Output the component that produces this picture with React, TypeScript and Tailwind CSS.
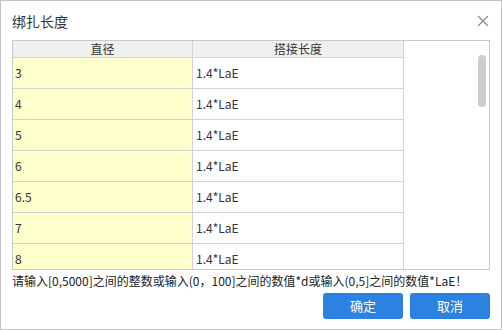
const rows = ['3', '4', '5', '6', '6.5', '7', '8'];

const font = { fontFamily: '"Noto Sans CJK SC", "Noto Sans", sans-serif' };

export default function App() {
  return (
    <div
      className="w-[502px] h-[330px] bg-white border border-[#c4c4c4] relative text-[#333]"
      style={font}
    >
      {/* Title bar */}
      <div className="h-[39px] flex items-center justify-between pl-[11px] pr-[12px]">
        <span className="text-[14px] leading-none">绑扎长度</span>
        <svg width="12" height="12" viewBox="0 0 12 12" className="mt-[1px]">
          <path d="M1 1 L11 11 M11 1 L1 11" stroke="#8a8a8a" strokeWidth="1.2" />
        </svg>
      </div>

      {/* Table */}
      <div className="ml-[11px] w-[478px] h-[230px] border border-[#c8c8c8] overflow-hidden relative">
        <div className="flex h-[17px] bg-[#f0f0f0] border-b border-[#d4d4d4] w-[391px] text-[12px] leading-[16px]">
          <div className="w-[180px] border-r border-[#d4d4d4] text-center">直径</div>
          <div className="w-[211px] border-r border-[#d4d4d4] text-center">搭接长度</div>
        </div>
        {rows.map((r) => (
          <div key={r} className="flex h-[31px] border-b border-[#d4d4d4] w-[391px] text-[12px]">
            <div className="w-[180px] bg-[#ffffcc] border-r border-[#d4d4d4] flex items-center pl-[2px]">{r}</div>
            <div className="w-[211px] border-r border-[#d4d4d4] flex items-center pl-[3px]">1.4*LaE</div>
          </div>
        ))}
        <div className="absolute left-[465px] top-[14px] w-[8px] h-[52px] rounded-full bg-[#cdcdcd]" />
      </div>

      {/* Hint */}
      <div className="pl-[11px] pt-[2px] text-[12px] leading-[17px] text-[#222]">
        请输入[0,5000]之间的整数或输入(0，100]之间的数值*d或输入(0,5]之间的数值*LaE！
      </div>

      {/* Buttons */}
      <div className="flex justify-end gap-[7px] pr-[11px] mt-[4px]">
        <button className="w-[80px] h-[26px] rounded-[3px] bg-[#2c82e0] text-white text-[13px]">确定</button>
        <button className="w-[80px] h-[26px] rounded-[3px] bg-[#2c82e0] text-white text-[13px]">取消</button>
      </div>
    </div>
  );
}
